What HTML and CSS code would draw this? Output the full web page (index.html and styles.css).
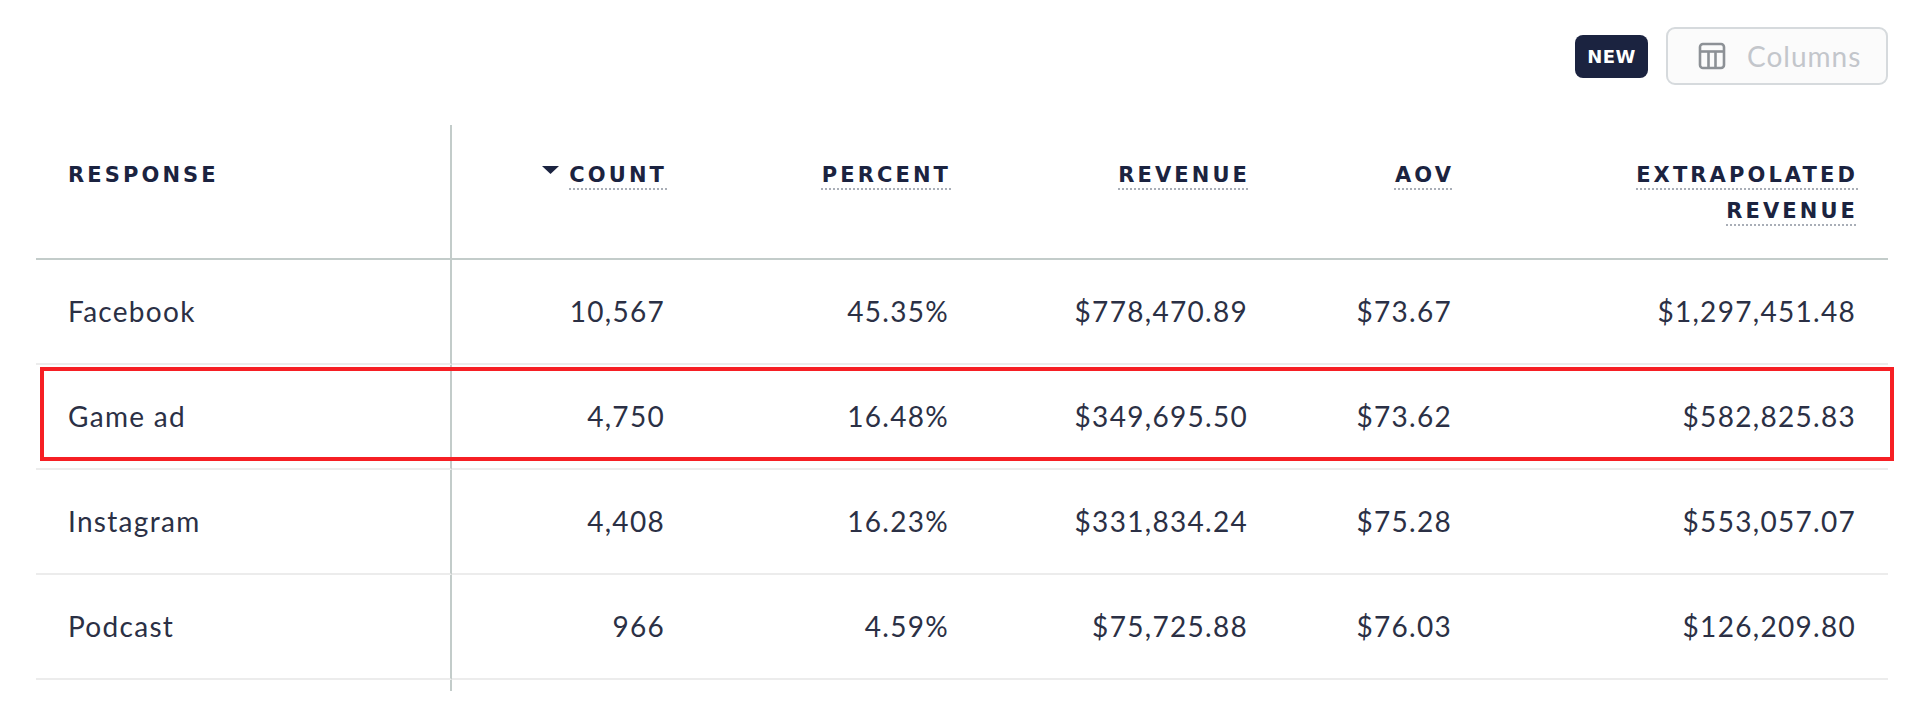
FILE: index.html
```html
<!DOCTYPE html>
<html lang="en">
<head>
<meta charset="utf-8">
<title>Responses</title>
<link rel="stylesheet" href="styles.css">
</head>
<body>
<div class="page">
  <div class="toolbar">
    <span class="badge">NEW</span>
    <button class="colbtn" type="button">
      <svg class="colicon" width="28" height="28" viewBox="0 0 28 28" aria-hidden="true">
        <rect x="2" y="2" width="24" height="24" rx="3" fill="none" stroke="#8d9196" stroke-width="2.6"/>
        <line x1="2" y1="9.5" x2="26" y2="9.5" stroke="#8d9196" stroke-width="2.6"/>
        <line x1="10.5" y1="9.5" x2="10.5" y2="26" stroke="#8d9196" stroke-width="2.6"/>
        <line x1="17.5" y1="9.5" x2="17.5" y2="26" stroke="#8d9196" stroke-width="2.6"/>
      </svg>
      <span>Columns</span>
    </button>
  </div>

  <div class="tablewrap">
    <table class="grid">
      <colgroup>
        <col class="c1"><col class="c2"><col class="c3"><col class="c4"><col class="c5"><col class="c6">
      </colgroup>
      <thead>
        <tr>
          <th class="first">RESPONSE</th>
          <th class="num"><svg class="sort" width="17" height="8" viewBox="0 0 17 8" aria-hidden="true"><polygon points="0,0 17,0 8.5,8" fill="#1b2340"/></svg><span class="u">COUNT</span></th>
          <th class="num"><span class="u">PERCENT</span></th>
          <th class="num"><span class="u">REVENUE</span></th>
          <th class="num"><span class="u">AOV</span></th>
          <th class="num"><span class="u">EXTRAPOLATED REVENUE</span></th>
        </tr>
      </thead>
      <tbody>
        <tr>
          <td class="first">Facebook</td><td class="num">10,567</td><td class="num">45.35%</td><td class="num">$778,470.89</td><td class="num">$73.67</td><td class="num">$1,297,451.48</td>
        </tr>
        <tr>
          <td class="first">Game ad</td><td class="num">4,750</td><td class="num">16.48%</td><td class="num">$349,695.50</td><td class="num">$73.62</td><td class="num">$582,825.83</td>
        </tr>
        <tr>
          <td class="first">Instagram</td><td class="num">4,408</td><td class="num">16.23%</td><td class="num">$331,834.24</td><td class="num">$75.28</td><td class="num">$553,057.07</td>
        </tr>
        <tr>
          <td class="first">Podcast</td><td class="num">966</td><td class="num">4.59%</td><td class="num">$75,725.88</td><td class="num">$76.03</td><td class="num">$126,209.80</td>
        </tr>
        <tr class="spacer">
          <td class="first"></td><td></td><td></td><td></td><td></td><td></td>
        </tr>
      </tbody>
    </table>
    <div class="highlight"></div>
  </div>
</div>
</body>
</html>
```

FILE: styles.css
```css
* { box-sizing: border-box; }

html, body {
  margin: 0;
  padding: 0;
  background: #ffffff;
}

body {
  font-family: Lato, "Open Sans", "Liberation Sans", sans-serif;
  color: #2b3045;
}

.page {
  padding: 27px 38px 0 36px;
}

.toolbar {
  display: flex;
  justify-content: flex-end;
  align-items: center;
  gap: 18px;
  height: 58px;
  margin-bottom: 40px;
}

.badge {
  display: inline-flex;
  align-items: center;
  justify-content: center;
  width: 73px;
  height: 43px;
  border-radius: 8px;
  background: #1b2340;
  color: #ffffff;
  font-family: "DejaVu Sans", Lato, sans-serif;
  font-weight: 700;
  font-size: 18px;
  letter-spacing: 0.5px;
}

.colbtn {
  display: flex;
  align-items: center;
  gap: 21px;
  width: 222px;
  height: 58px;
  padding: 0 0 0 30px;
  border: 2px solid #d6dadd;
  border-radius: 9px;
  background: #fbfbfb;
  color: #c3c6cb;
  font-family: Lato, "Open Sans", sans-serif;
  font-size: 28px;
  letter-spacing: 1px;
  cursor: default;
}

.colicon { flex: none; }

.tablewrap {
  position: relative;
  width: 1852px;
}

.grid {
  width: 1852px;
  table-layout: fixed;
  border-collapse: separate;
  border-spacing: 0;
}

.c1 { width: 416px; }
.c2 { width: 245px; }
.c3 { width: 284px; }
.c4 { width: 299px; }
.c5 { width: 204px; }
.c6 { width: 404px; }

.grid th {
  padding: 32px 30px 29px 32px;
  vertical-align: top;
  font-family: "DejaVu Sans", Lato, sans-serif;
  font-size: 21px;
  font-weight: 700;
  line-height: 36px;
  letter-spacing: 3.1px;
  color: #1b2340;
  text-align: left;
  border-bottom: 2px solid #c3ccca;
}

.grid th.num { text-align: right; }

.u {
  text-decoration-line: underline;
  text-decoration-style: dotted;
  text-decoration-color: #a9aeb7;
  text-decoration-thickness: 2px;
  text-underline-offset: 6px;
}

.sort {
  display: inline-block;
  vertical-align: 8px;
  margin-right: 10px;
}

.grid td {
  padding: 0 33px 0 32px;
  font-size: 28px;
  letter-spacing: 1.3px;
  line-height: 103px;
  white-space: nowrap;
  border-bottom: 2px solid #ececec;
}

.grid td.num { text-align: right; padding-right: 32px; }

.grid .first { border-right: 2px solid #c3ccca; }

.grid .spacer td {
  height: 11px;
  line-height: 11px;
  border-bottom: none;
}

.highlight {
  position: absolute;
  left: 4px;
  top: 242px;
  width: 1854px;
  height: 94px;
  border: 4px solid #f61f24;
  pointer-events: none;
}
```
